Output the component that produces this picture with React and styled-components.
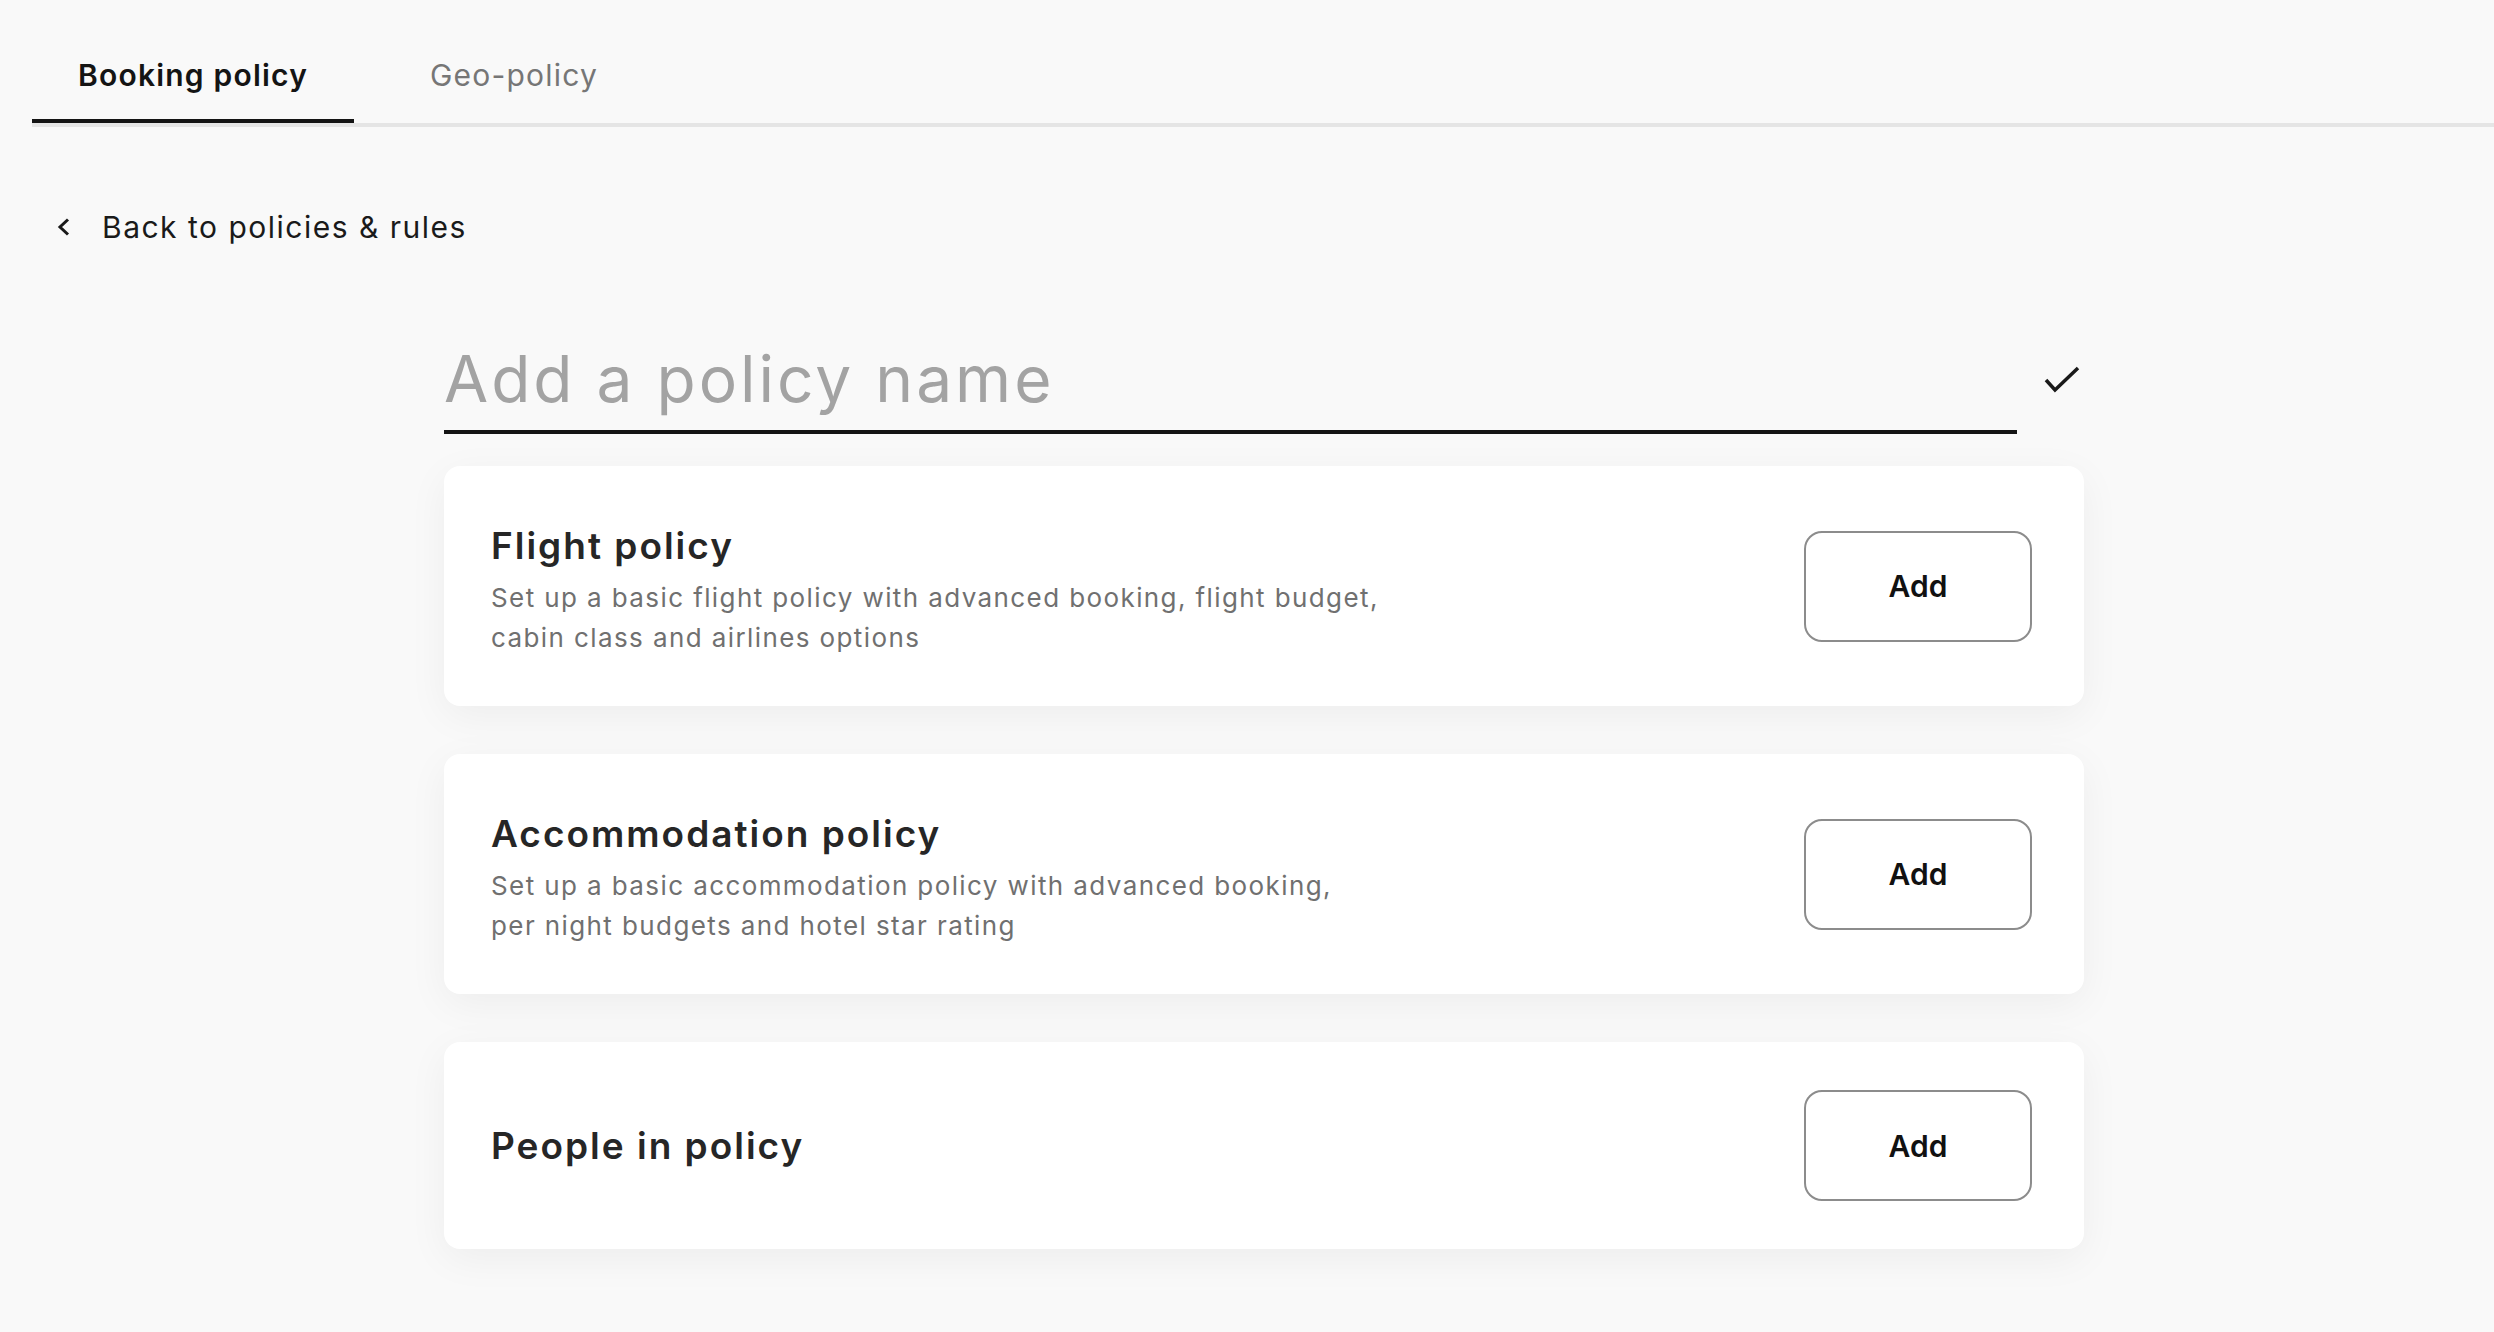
import React from "react";
import styled, { createGlobalStyle } from "styled-components";

const GlobalStyle = createGlobalStyle`
  html, body {
    margin: 0;
    padding: 0;
    background: #f9f9f9;
  }
  body {
    font-family: Inter, "Open Sans", "Liberation Sans", sans-serif;
    color: #1a1a1a;
    -webkit-font-smoothing: antialiased;
  }
  * { box-sizing: border-box; }
`;

const Page = styled.div`
  min-height: 1332px;
  padding-left: 32px;
`;

const TabBar = styled.nav`
  display: flex;
  gap: 30px;
  border-bottom: 4px solid #e5e5e5;
`;

const Tab = styled.button`
  appearance: none;
  background: none;
  border: none;
  border-bottom: 4px solid ${(p) => (p.$active ? "#141414" : "transparent")};
  margin: 0;
  padding: 57px 46px 26px;
  font-family: inherit;
  font-size: 30px;
  line-height: 36px;
  letter-spacing: 1.2px;
  font-weight: ${(p) => (p.$active ? 600 : 400)};
  color: ${(p) => (p.$active ? "#141414" : "#767676")};
  cursor: pointer;
`;

const BackLink = styled.a`
  display: flex;
  align-items: center;
  gap: 32px;
  margin-top: 80px;
  padding-left: 25px;
  font-size: 30px;
  line-height: 40px;
  letter-spacing: 1.5px;
  color: #1a1a1a;
  text-decoration: none;
  cursor: pointer;
`;

const Content = styled.main`
  width: 1640px;
  margin-left: 412px;
  margin-top: 95px;
  padding-bottom: 80px;
`;

const NameRow = styled.div`
  display: flex;
  align-items: center;
  gap: 27px;
`;

const NameInput = styled.input`
  width: 1573px;
  height: 92px;
  padding: 0 0 15px;
  border: none;
  border-bottom: 4px solid #141414;
  background: transparent;
  font-family: inherit;
  font-size: 64px;
  line-height: 73px;
  letter-spacing: 3px;
  font-weight: 400;
  color: #1a1a1a;
  outline: none;
  &::placeholder {
    color: #a3a3a3;
  }
`;

const CheckButton = styled.button`
  appearance: none;
  background: none;
  border: none;
  padding: 0;
  margin-bottom: 16px;
  display: flex;
  cursor: pointer;
`;

const CardList = styled.div`
  display: flex;
  flex-direction: column;
  gap: 48px;
  margin-top: 32px;
`;

const Card = styled.section`
  display: flex;
  align-items: center;
  justify-content: space-between;
  padding: 48px 52px 48px 47px;
  background: #ffffff;
  border-radius: 16px;
  box-shadow: 0 10px 40px rgba(0, 0, 0, 0.05);
`;

const CardText = styled.div`
  display: flex;
  flex-direction: column;
  padding-top: ${(p) => (p.$withDesc ? "8px" : "0")};
`;

const CardTitle = styled.h2`
  margin: 0;
  font-size: 37px;
  line-height: 48px;
  letter-spacing: 2px;
  font-weight: 600;
  color: #262626;
`;

const CardDesc = styled.p`
  margin: 8px 0 0;
  max-width: 1000px;
  font-size: 26px;
  line-height: 40px;
  letter-spacing: 1.4px;
  font-weight: 400;
  color: #707070;
`;

const AddButton = styled.button`
  appearance: none;
  width: 228px;
  height: 111px;
  flex-shrink: 0;
  background: #ffffff;
  border: 2px solid #8c8c8c;
  border-radius: 18px;
  font-family: inherit;
  font-size: 30px;
  font-weight: 600;
  color: #111111;
  cursor: pointer;
`;

const ChevronLeft = () => (
  <svg width="13" height="18" viewBox="0 0 13 18" fill="none">
    <path d="M11 1.5 L3 9 L11 16.5" stroke="#1a1a1a" strokeWidth="3" />
  </svg>
);

const Check = () => (
  <svg width="36" height="28" viewBox="0 0 36 28" fill="none">
    <path d="M2 14 L11 24 L34 2" stroke="#1a1a1a" strokeWidth="3.5" />
  </svg>
);

const policies = [
  {
    title: "Flight policy",
    desc: [
      "Set up a basic flight policy with advanced booking, flight budget,",
      "cabin class and airlines options",
    ],
  },
  {
    title: "Accommodation policy",
    desc: [
      "Set up a basic accommodation policy with advanced booking,",
      "per night budgets and hotel star rating",
    ],
  },
  { title: "People in policy", desc: null },
];

export default function App() {
  return (
    <>
      <GlobalStyle />
      <Page>
        <TabBar>
          <Tab $active>Booking policy</Tab>
          <Tab>Geo-policy</Tab>
        </TabBar>
        <BackLink>
          <ChevronLeft />
          <span>Back to policies &amp; rules</span>
        </BackLink>
        <Content>
          <NameRow>
            <NameInput placeholder="Add a policy name" />
            <CheckButton aria-label="Save">
              <Check />
            </CheckButton>
          </NameRow>
          <CardList>
            {policies.map((p) => (
              <Card key={p.title}>
                <CardText $withDesc={!!p.desc}>
                  <CardTitle>{p.title}</CardTitle>
                  {p.desc && (
                    <CardDesc>
                      {p.desc[0]}
                      <br />
                      {p.desc[1]}
                    </CardDesc>
                  )}
                </CardText>
                <AddButton>Add</AddButton>
              </Card>
            ))}
          </CardList>
        </Content>
      </Page>
    </>
  );
}
